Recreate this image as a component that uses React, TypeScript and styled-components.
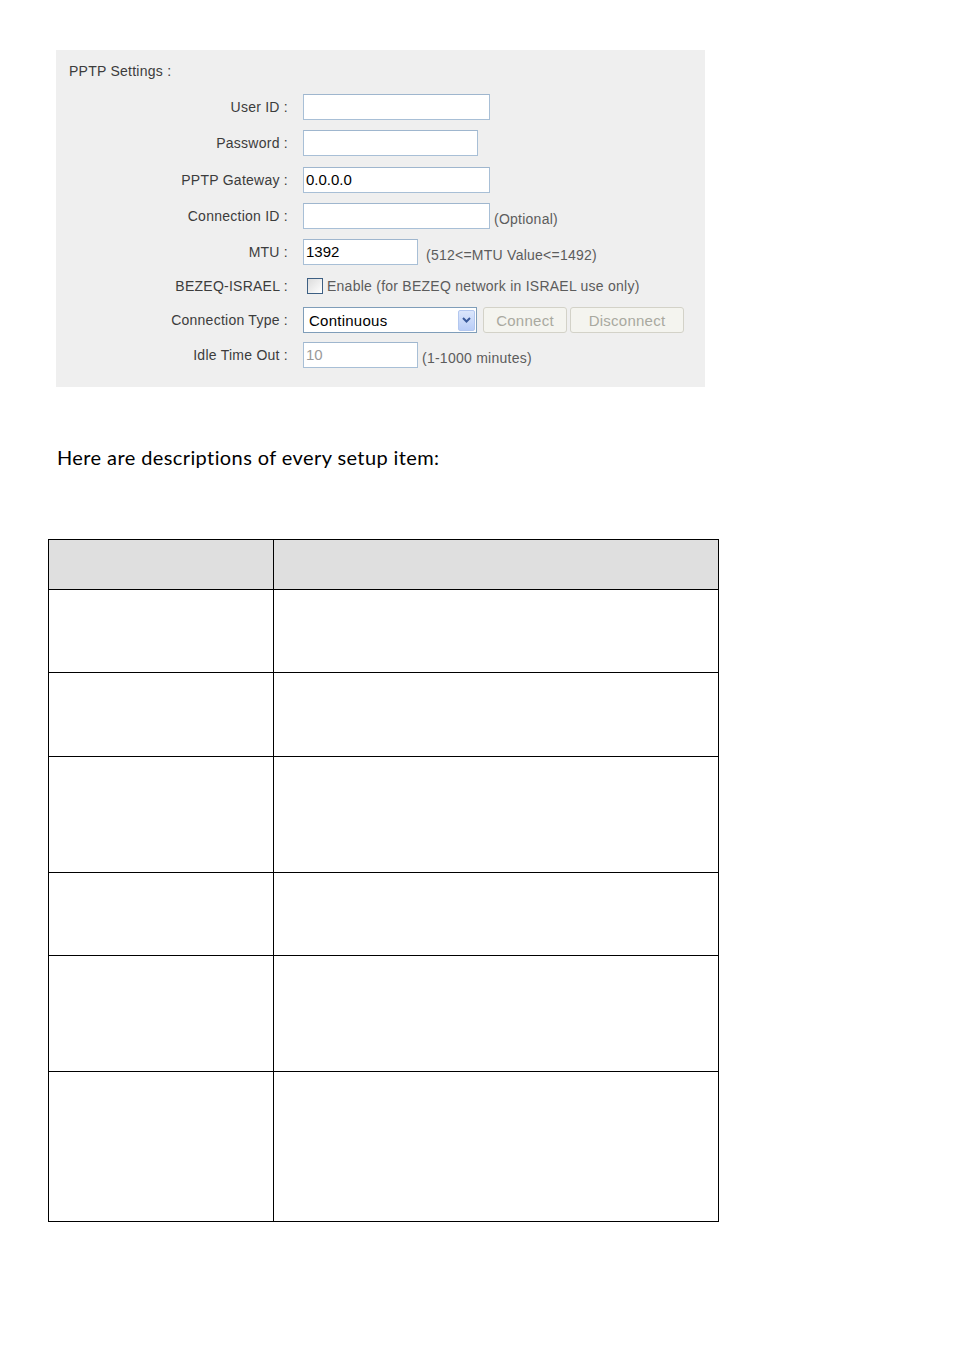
import React from "react";
import styled, { createGlobalStyle } from "styled-components";

const GlobalStyle = createGlobalStyle`
  body {
    margin: 0;
    background: #ffffff;
  }
`;

const Page = styled.div`
  width: 954px;
  min-height: 1350px;
  padding-top: 50px;
  box-sizing: border-box;
`;

const Panel = styled.div`
  margin-left: 56px;
  width: 649px;
  background: #efefef;
  padding-bottom: 15px;
  font-family: "Liberation Sans", Arial, sans-serif;
  font-size: 14px;
  letter-spacing: 0.25px;
  color: #3c3c3c;
`;

const Title = styled.div`
  height: 39px;
  box-sizing: border-box;
  padding: 12px 0 0 13px;
  line-height: 18px;
`;

const Row = styled.div<{ $h: number }>`
  display: grid;
  grid-template-columns: 232px 1fr;
  column-gap: 15px;
  align-items: center;
  height: ${(p) => p.$h}px;
`;

const Label = styled.div`
  text-align: right;
  white-space: nowrap;
`;

const Controls = styled.div`
  display: flex;
  align-items: center;
`;

const Input = styled.div<{ $w: number; $disabled?: boolean }>`
  width: ${(p) => p.$w}px;
  height: 26px;
  box-sizing: border-box;
  border: 1px solid #a8bfd6;
  border-top-color: #9fb6ce;
  background: #fff;
  padding-left: 2px;
  font-size: 15px;
  letter-spacing: 0;
  line-height: 24px;
  color: ${(p) => (p.$disabled ? "#9a9a9a" : "#000")};
`;

const Hint = styled.span<{ $gap: number }>`
  margin-left: ${(p) => p.$gap}px;
  padding-top: 6px;
  color: #5c5c5c;
  white-space: nowrap;
`;

const Check = styled.span`
  width: 14px;
  height: 14px;
  margin-left: 4px;
  border: 1px solid #3d5f83;
  background: linear-gradient(135deg, #dcdcdc, #ffffff);
  box-sizing: content-box;
`;

const CheckText = styled.span`
  margin-left: 4px;
  color: #5c5c5c;
  white-space: nowrap;
`;

const Select = styled.div`
  width: 174px;
  height: 26px;
  box-sizing: border-box;
  border: 1px solid #7f9db9;
  background: #fff;
  display: flex;
  align-items: center;
  justify-content: space-between;
  padding: 0 1px 0 5px;
  font-size: 15px;
  color: #000;
`;

const Arrow = styled.span`
  width: 17px;
  height: 21px;
  border-radius: 2px;
  background: linear-gradient(180deg, #dbe6fb, #b9cdf7);
  border: 1px solid #b3c7ef;
  display: flex;
  align-items: center;
  justify-content: center;
  box-sizing: border-box;
`;

const Button = styled.div<{ $w: number }>`
  width: ${(p) => p.$w}px;
  height: 26px;
  margin-left: ${(p) => (p.$w > 100 ? 3 : 6)}px;
  box-sizing: border-box;
  border: 1px solid #d3d2c8;
  border-radius: 3px;
  background: #f4f4ef;
  color: #a9a9a0;
  font-size: 15px;
  display: flex;
  align-items: center;
  justify-content: center;
`;

const Intro = styled.p`
  margin: 58px 0 0 57px;
  font-family: Lato, "Open Sans", sans-serif;
  font-size: 20px;
  letter-spacing: 0.4px;
  line-height: 24px;
  color: #000;
`;

const Table = styled.table`
  margin: 70px 0 0 48px;
  width: 671px;
  border-collapse: collapse;
`;

const Cell = styled.td<{ $head?: boolean; $h: number }>`
  border: 1.5px solid #000;
  height: ${(p) => p.$h}px;
  padding: 0;
  background: ${(p) => (p.$head ? "#dfdfdf" : "#fff")};
  &:first-child {
    width: 224px;
  }
`;

const rows = [82, 83, 115, 82, 115, 149];

export default function App() {
  return (
    <Page>
      <GlobalStyle />
      <Panel>
        <Title>PPTP Settings :</Title>
        <Row $h={36}>
          <Label>User ID :</Label>
          <Controls>
            <Input $w={187} />
          </Controls>
        </Row>
        <Row $h={36}>
          <Label>Password :</Label>
          <Controls>
            <Input $w={175} />
          </Controls>
        </Row>
        <Row $h={37}>
          <Label>PPTP Gateway :</Label>
          <Controls>
            <Input $w={187}>0.0.0.0</Input>
          </Controls>
        </Row>
        <Row $h={36}>
          <Label>Connection ID :</Label>
          <Controls>
            <Input $w={187} />
            <Hint $gap={4}>(Optional)</Hint>
          </Controls>
        </Row>
        <Row $h={36}>
          <Label>MTU :</Label>
          <Controls>
            <Input $w={115}>1392</Input>
            <Hint $gap={8}>(512&lt;=MTU Value&lt;=1492)</Hint>
          </Controls>
        </Row>
        <Row $h={32}>
          <Label>BEZEQ-ISRAEL :</Label>
          <Controls>
            <Check />
            <CheckText>Enable (for BEZEQ network in ISRAEL use only)</CheckText>
          </Controls>
        </Row>
        <Row $h={36}>
          <Label>Connection Type :</Label>
          <Controls>
            <Select>
              Continuous
              <Arrow>
                <svg width="9" height="6" viewBox="0 0 9 6">
                  <path d="M1 1 L4.5 4.5 L8 1" fill="none" stroke="#3a5a9a" strokeWidth="2" />
                </svg>
              </Arrow>
            </Select>
            <Button $w={84}>Connect</Button>
            <Button $w={114}>Disconnect</Button>
          </Controls>
        </Row>
        <Row $h={34}>
          <Label>Idle Time Out :</Label>
          <Controls>
            <Input $w={115} $disabled>10</Input>
            <Hint $gap={4}>(1-1000 minutes)</Hint>
          </Controls>
        </Row>
      </Panel>
      <Intro>Here are descriptions of every setup item:</Intro>
      <Table>
        <tbody>
          <tr>
            <Cell $head $h={49} />
            <Cell $head $h={49} />
          </tr>
          {rows.map((h, i) => (
            <tr key={i}>
              <Cell $h={h} />
              <Cell $h={h} />
            </tr>
          ))}
        </tbody>
      </Table>
    </Page>
  );
}
